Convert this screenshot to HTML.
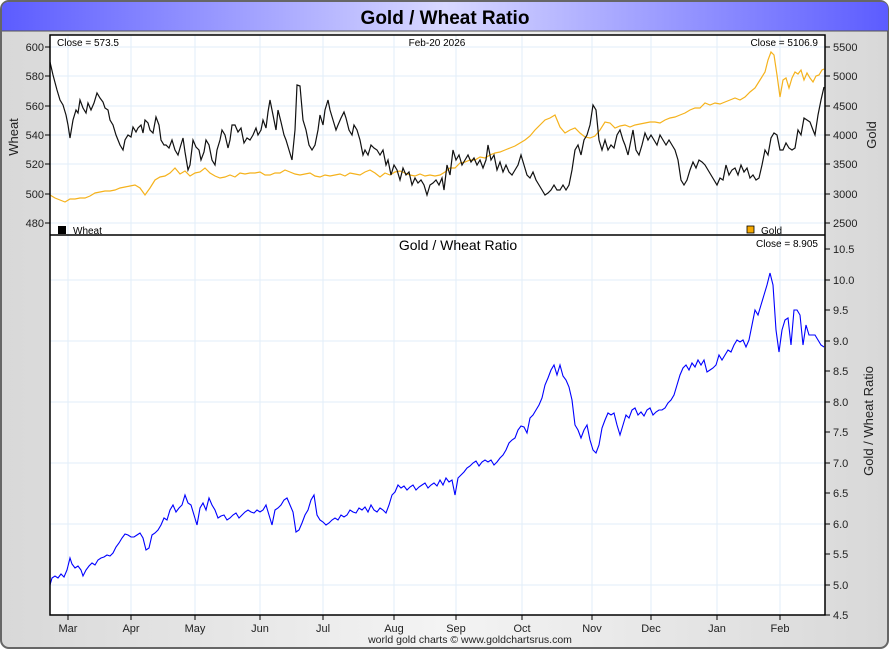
<!DOCTYPE html>
<html><head><meta charset="utf-8"><style>
html,body{margin:0;padding:0;background:#fff;}
svg{display:block;font-family:"Liberation Sans",sans-serif;}
</style></head><body>
<svg width="890" height="650" viewBox="0 0 890 650" xmlns="http://www.w3.org/2000/svg">
<defs>
<linearGradient id="tb" x1="0" x2="1" y1="0" y2="0">
<stop offset="0" stop-color="#5c5cff"/><stop offset="0.5" stop-color="#d8d8ff"/><stop offset="1" stop-color="#5c5cff"/>
</linearGradient>
<linearGradient id="bg" x1="0" x2="1" y1="0" y2="0">
<stop offset="0" stop-color="#d8d8d8"/><stop offset="0.5" stop-color="#f4f4f4"/><stop offset="1" stop-color="#d8d8d8"/>
</linearGradient>
</defs>
<rect x="1" y="1" width="887" height="647" rx="8" fill="url(#bg)" stroke="#666" stroke-width="2"/>
<path d="M2,31 L2,9 Q2,2 9,2 L881,2 Q888,2 888,9 L888,31 Z" fill="url(#tb)"/>
<line x1="2" y1="31" x2="888" y2="31" stroke="#555" stroke-width="1"/>
<text x="445" y="24" text-anchor="middle" font-size="19" font-weight="bold" fill="#000">Gold / Wheat Ratio</text>
<rect x="50" y="35" width="775" height="580" fill="#fff"/>
<g stroke="#e2eef8" stroke-width="1">
<line x1="68" y1="35" x2="68" y2="614"/><line x1="131" y1="35" x2="131" y2="614"/><line x1="195" y1="35" x2="195" y2="614"/><line x1="260" y1="35" x2="260" y2="614"/><line x1="323" y1="35" x2="323" y2="614"/><line x1="394" y1="35" x2="394" y2="614"/><line x1="456" y1="35" x2="456" y2="614"/><line x1="522" y1="35" x2="522" y2="614"/><line x1="592" y1="35" x2="592" y2="614"/><line x1="651" y1="35" x2="651" y2="614"/><line x1="717" y1="35" x2="717" y2="614"/><line x1="780" y1="35" x2="780" y2="614"/>
<line x1="50" y1="47" x2="825" y2="47"/><line x1="50" y1="76" x2="825" y2="76"/><line x1="50" y1="106" x2="825" y2="106"/><line x1="50" y1="135" x2="825" y2="135"/><line x1="50" y1="164" x2="825" y2="164"/><line x1="50" y1="194" x2="825" y2="194"/><line x1="50" y1="223" x2="825" y2="223"/>
<line x1="50" y1="280" x2="825" y2="280"/><line x1="50" y1="341" x2="825" y2="341"/><line x1="50" y1="402" x2="825" y2="402"/><line x1="50" y1="463" x2="825" y2="463"/><line x1="50" y1="524" x2="825" y2="524"/><line x1="50" y1="585" x2="825" y2="585"/>
</g>
<polyline fill="none" stroke="#f5b21c" stroke-width="1.2" points="50,195 55,198 60,200 65,202 70,199 75,199 80,198 85,198 90,196 95,193 100,192 105,191 110,191 115,190 120,188 125,187 130,186 135,185 140,188 145,195 150,188 155,180 160,177 165,176 170,173 175,168 180,174 185,171 190,176 195,173 200,172 205,168 210,173 215,176 220,178 225,177 230,175 235,177 240,173 245,174 250,173 255,173 260,172 265,175 270,175 275,173 280,173 285,170 290,172 295,174 300,175 305,174 310,173 315,176 320,177 325,175 330,176 335,175 340,174 345,176 350,173 355,174 360,175 365,172 370,170 375,173 380,177 385,173 390,175 395,172 400,171 405,173 410,175 415,176 420,174 425,176 430,175 435,176 440,175 445,172 450,168 455,168 460,163 465,162 470,160 475,160 480,157 485,158 490,155 495,153 500,152 505,150 510,148 515,146 520,143 525,140 530,136 535,130 540,125 545,120 550,118 555,115 560,127 565,133 570,130 575,128 580,133 585,137 590,138 595,136 600,130 605,122 610,123 615,128 620,126 625,125 630,127 635,125 640,124 645,123 650,122 655,122 660,123 665,120 670,118 675,117 680,115 685,113 690,110 695,108 700,108 705,103 710,105 715,103 720,104 725,102 730,100 735,98 740,100 745,97 750,92 755,88 760,80 765,72 768,60 771,52 774,55 777,75 780,97 783,80 786,78 789,88 792,78 795,72 798,74 801,70 804,80 807,73 810,78 813,82 816,76 819,75 822,70 824,69"/>
<polyline fill="none" stroke="#111" stroke-width="1.2" points="50,62 53,75 57,90 60,100 63,105 66,115 68,125 70,138 73,120 76,110 78,113 80,100 83,108 86,113 88,103 91,110 94,103 97,93 100,98 103,102 105,108 108,110 110,120 113,125 116,135 118,140 120,145 123,150 125,140 128,135 131,137 133,127 136,132 138,128 141,125 143,133 145,120 148,123 150,130 153,133 156,117 159,125 161,140 164,145 166,145 169,148 172,140 175,150 178,155 180,148 183,138 185,152 188,170 190,165 193,140 196,147 199,150 201,160 204,152 206,140 209,145 212,160 215,165 217,150 220,140 222,130 225,135 228,148 230,140 232,125 235,125 238,132 241,128 244,143 247,138 250,140 253,135 256,128 258,135 261,130 263,120 266,128 268,112 270,100 273,115 276,130 278,110 281,122 284,135 286,140 289,150 292,160 295,130 297,85 300,86 303,120 306,130 309,145 312,150 315,145 318,130 320,115 323,125 325,110 328,100 330,110 333,120 336,130 338,125 341,118 344,112 346,118 349,130 352,135 354,125 357,130 360,140 363,155 365,150 368,155 371,145 374,148 377,150 380,155 383,150 386,165 388,160 391,175 394,165 397,170 400,180 403,168 406,175 409,172 412,185 415,178 418,183 421,180 424,185 427,195 430,185 433,183 436,180 439,185 442,178 444,190 447,165 450,175 453,150 456,160 459,155 462,165 465,160 468,155 471,162 474,158 477,165 480,160 483,168 486,160 488,145 491,160 494,155 497,170 500,162 503,172 506,165 509,172 512,175 515,170 518,165 521,155 524,165 527,175 530,178 533,172 536,180 539,185 542,190 545,195 548,193 551,190 554,185 557,190 560,190 563,185 566,190 569,185 572,170 575,150 578,145 581,155 584,140 587,135 590,125 593,105 596,110 599,140 602,150 605,140 608,150 611,145 614,148 617,135 620,130 623,140 625,145 628,155 630,145 633,130 636,150 639,155 642,145 645,133 648,140 651,135 654,140 657,145 660,135 663,140 666,145 669,140 672,145 675,150 678,160 681,180 684,185 687,180 690,170 693,162 696,168 699,160 702,162 705,165 708,170 711,175 714,180 717,185 720,178 723,180 726,165 729,175 732,170 735,168 738,175 741,165 744,172 747,168 750,178 753,175 756,180 759,178 762,165 765,150 768,155 771,138 774,133 777,135 780,150 783,150 786,143 789,148 792,150 795,148 798,130 801,135 804,118 807,120 810,122 813,130 815,135 818,115 821,100 824,87"/>
<polyline fill="none" stroke="#0000ff" stroke-width="1.1" points="50,585 52,578 55,576 58,578 61,574 64,577 67,570 70,558 72,564 75,568 78,566 81,570 83,576 86,570 89,566 92,563 95,565 98,560 101,558 104,557 107,555 110,556 113,553 116,547 119,543 122,538 125,534 128,535 131,537 134,537 137,535 140,533 143,538 146,550 149,548 152,535 155,533 158,530 161,525 164,518 167,520 170,510 173,505 176,512 179,508 182,505 185,495 188,503 191,505 194,515 197,525 200,508 203,503 206,510 209,498 212,505 215,510 218,518 221,516 224,515 227,520 230,518 233,515 236,513 239,518 242,515 245,512 248,510 251,512 254,513 257,510 260,512 263,510 266,505 269,515 272,525 275,510 278,508 281,505 284,500 287,498 290,505 293,512 296,532 299,530 302,523 305,515 308,510 311,500 314,495 317,515 320,520 323,522 326,525 329,523 332,520 335,518 338,520 341,515 344,517 347,515 350,510 353,512 356,513 359,508 362,510 365,507 368,512 371,505 374,510 377,512 380,508 383,510 386,513 389,505 392,495 395,492 398,485 401,488 404,486 407,490 410,487 413,485 416,490 419,487 422,485 425,483 428,488 431,485 434,483 437,486 440,480 443,485 446,478 449,482 452,480 455,495 458,478 461,475 464,472 467,468 470,466 473,463 476,461 479,466 482,462 485,460 488,462 491,460 494,465 497,462 500,458 503,455 506,450 509,443 512,440 515,438 518,430 521,426 524,427 527,433 530,418 533,415 536,410 539,405 542,398 545,385 548,378 551,370 554,365 557,375 560,365 563,376 566,380 569,387 572,400 575,425 578,430 581,438 584,430 587,425 590,440 593,450 596,453 599,445 602,428 605,420 608,413 611,415 614,413 617,425 620,435 623,425 626,415 629,418 632,410 635,408 638,415 641,412 644,416 647,410 650,408 653,415 656,412 659,410 662,410 665,408 668,403 671,400 674,395 677,385 680,375 683,368 686,365 689,370 692,363 695,367 698,360 701,365 704,360 707,372 710,370 713,368 716,365 719,355 722,360 725,355 728,350 731,352 734,345 737,340 740,342 743,340 746,347 749,340 752,325 755,310 758,315 761,305 764,295 767,285 770,273 773,285 776,330 779,352 782,330 785,320 788,318 791,345 794,310 797,310 800,315 803,345 806,325 809,335 812,335 815,335 818,340 821,345 824,347"/>
<rect x="50" y="35" width="775" height="580" fill="none" stroke="#000" stroke-width="1.5"/>
<line x1="50" y1="235" x2="825" y2="235" stroke="#000" stroke-width="1.5"/>
<g stroke="#000" stroke-width="1">
<line x1="45" y1="47" x2="50" y2="47"/><line x1="45" y1="76" x2="50" y2="76"/><line x1="45" y1="106" x2="50" y2="106"/><line x1="45" y1="135" x2="50" y2="135"/><line x1="45" y1="164" x2="50" y2="164"/><line x1="45" y1="194" x2="50" y2="194"/><line x1="45" y1="223" x2="50" y2="223"/>
<line x1="825" y1="47" x2="830" y2="47"/><line x1="825" y1="76" x2="830" y2="76"/><line x1="825" y1="106" x2="830" y2="106"/><line x1="825" y1="135" x2="830" y2="135"/><line x1="825" y1="164" x2="830" y2="164"/><line x1="825" y1="194" x2="830" y2="194"/><line x1="825" y1="223" x2="830" y2="223"/>
<line x1="825" y1="249" x2="830" y2="249"/><line x1="825" y1="280" x2="830" y2="280"/><line x1="825" y1="310" x2="830" y2="310"/><line x1="825" y1="341" x2="830" y2="341"/><line x1="825" y1="371" x2="830" y2="371"/><line x1="825" y1="402" x2="830" y2="402"/><line x1="825" y1="432" x2="830" y2="432"/><line x1="825" y1="463" x2="830" y2="463"/><line x1="825" y1="493" x2="830" y2="493"/><line x1="825" y1="524" x2="830" y2="524"/><line x1="825" y1="554" x2="830" y2="554"/><line x1="825" y1="585" x2="830" y2="585"/><line x1="825" y1="615" x2="830" y2="615"/>
<line x1="68" y1="615" x2="68" y2="620"/><line x1="131" y1="615" x2="131" y2="620"/><line x1="195" y1="615" x2="195" y2="620"/><line x1="260" y1="615" x2="260" y2="620"/><line x1="323" y1="615" x2="323" y2="620"/><line x1="394" y1="615" x2="394" y2="620"/><line x1="456" y1="615" x2="456" y2="620"/><line x1="522" y1="615" x2="522" y2="620"/><line x1="592" y1="615" x2="592" y2="620"/><line x1="651" y1="615" x2="651" y2="620"/><line x1="717" y1="615" x2="717" y2="620"/><line x1="780" y1="615" x2="780" y2="620"/>
</g>
<g font-size="11" fill="#222" text-anchor="end">
<text x="44" y="51">600</text><text x="44" y="80">580</text><text x="44" y="110">560</text><text x="44" y="139">540</text><text x="44" y="168">520</text><text x="44" y="198">500</text><text x="44" y="227">480</text>
</g>
<g font-size="11" fill="#222">
<text x="833" y="51">5500</text><text x="833" y="80">5000</text><text x="833" y="110">4500</text><text x="833" y="139">4000</text><text x="833" y="168">3500</text><text x="833" y="198">3000</text><text x="833" y="227">2500</text>
<text x="833" y="253">10.5</text><text x="833" y="284">10.0</text><text x="833" y="314">9.5</text><text x="833" y="345">9.0</text><text x="833" y="375">8.5</text><text x="833" y="406">8.0</text><text x="833" y="436">7.5</text><text x="833" y="467">7.0</text><text x="833" y="497">6.5</text><text x="833" y="528">6.0</text><text x="833" y="558">5.5</text><text x="833" y="589">5.0</text><text x="833" y="619">4.5</text>
</g>
<g font-size="11" fill="#222" text-anchor="middle">
<text x="68" y="632">Mar</text><text x="131" y="632">Apr</text><text x="195" y="632">May</text><text x="260" y="632">Jun</text><text x="323" y="632">Jul</text><text x="394" y="632">Aug</text><text x="456" y="632">Sep</text><text x="522" y="632">Oct</text><text x="592" y="632">Nov</text><text x="651" y="632">Dec</text><text x="717" y="632">Jan</text><text x="780" y="632">Feb</text>
<text x="470" y="643" font-size="10.5">world gold charts © www.goldchartsrus.com</text>
</g>
<text transform="translate(18,137) rotate(-90)" font-size="13" text-anchor="middle" fill="#222">Wheat</text>
<text transform="translate(876,135) rotate(-90)" font-size="13" text-anchor="middle" fill="#222">Gold</text>
<text transform="translate(873,421) rotate(-90)" font-size="13" text-anchor="middle" fill="#222">Gold / Wheat Ratio</text>
<text x="57" y="46" font-size="10" fill="#000">Close = 573.5</text>
<text x="437" y="46" font-size="10" text-anchor="middle" fill="#000">Feb-20  2026</text>
<text x="818" y="46" font-size="10" text-anchor="end" fill="#000">Close = 5106.9</text>
<rect x="58" y="226" width="8" height="8" fill="#000"/>
<text x="73" y="234" font-size="10" fill="#000">Wheat</text>
<rect x="747" y="226" width="7" height="7" fill="#f5a800" stroke="#000" stroke-width="0.8"/>
<text x="761" y="234" font-size="10" fill="#000">Gold</text>
<text x="458" y="250" font-size="14" text-anchor="middle" fill="#000">Gold  /  Wheat Ratio</text>
<text x="818" y="247" font-size="10" text-anchor="end" fill="#000">Close = 8.905</text>
</svg>
</body></html>
